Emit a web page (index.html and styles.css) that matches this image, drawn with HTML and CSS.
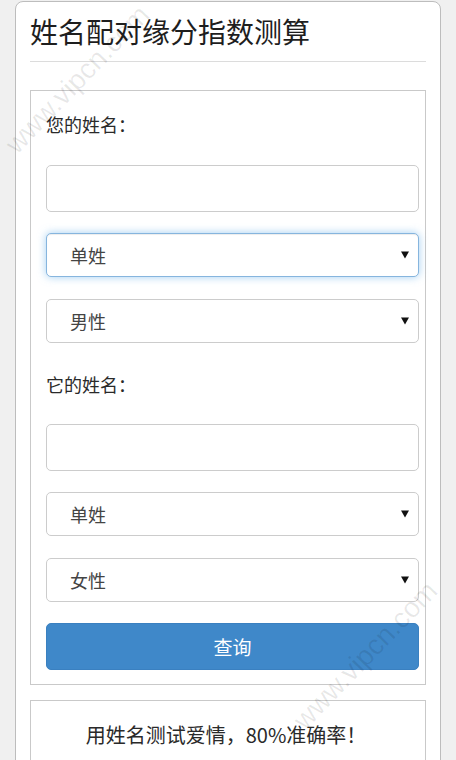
FILE: index.html
```html
<!DOCTYPE html>
<html lang="zh-CN">
<head>
<meta charset="utf-8">
<title>姓名配对缘分指数测算</title>
<link rel="stylesheet" href="styles.css">
</head>
<body>
<div class="card">
  <h1 class="title">姓名配对缘分指数测算</h1>
  <hr class="rule">
  <form class="form-box">
    <p class="label">您的姓名：</p>
    <input class="field input first-input" type="text">
    <div class="sel gap21">
      <select class="field select focus"><option>单姓</option><option>复姓</option></select>
      <svg class="arrow" width="8" height="8" viewBox="0 0 8 8"><path d="M0 0.5 H8 L4 7.5 Z" fill="#111"/></svg>
    </div>
    <div class="sel gap22">
      <select class="field select"><option>男性</option><option>女性</option></select>
      <svg class="arrow" width="8" height="8" viewBox="0 0 8 8"><path d="M0 0.5 H8 L4 7.5 Z" fill="#111"/></svg>
    </div>
    <p class="label label2">它的姓名：</p>
    <input class="field input second-input" type="text">
    <div class="sel gap21">
      <select class="field select"><option>单姓</option><option>复姓</option></select>
      <svg class="arrow" width="8" height="8" viewBox="0 0 8 8"><path d="M0 0.5 H8 L4 7.5 Z" fill="#111"/></svg>
    </div>
    <div class="sel gap22">
      <select class="field select"><option>女性</option><option>男性</option></select>
      <svg class="arrow" width="8" height="8" viewBox="0 0 8 8"><path d="M0 0.5 H8 L4 7.5 Z" fill="#111"/></svg>
    </div>
    <button class="btn" type="button">查询</button>
  </form>
  <div class="info-box">
    <p class="info">用姓名测试爱情，80%准确率！</p>
  </div>
</div>
<div class="wm wm1">www.vipcn.com</div>
<div class="wm wm2">www.vipcn.com</div>
</body>
</html>
```

FILE: styles.css
```css
html, body {
  margin: 0;
  padding: 0;
}
body {
  background: #f0f0f0;
  font-family: "Noto Sans CJK SC", "Noto Sans", sans-serif;
  color: #333;
  overflow: hidden;
  height: 760px;
}
.card {
  box-sizing: border-box;
  width: 426px;
  margin: 1px 0 0 15px;
  height: 780px;
  background: #fff;
  border: 1px solid #bdbdbd;
  border-radius: 8px;
  padding: 0 14px;
}
.title {
  margin: 0;
  padding-top: 9px;
  font-size: 28px;
  line-height: 40px;
  font-weight: normal;
  color: #1e1e1e;
}
.rule {
  margin: 10px 0 0;
  border: 0;
  border-top: 1px solid #dcdcdc;
  height: 0;
}
.form-box {
  margin: 28px 0 0;
  border: 1px solid #c9c9c9;
  padding: 21px 6px 14px 15px;
  display: flex;
  flex-direction: column;
}
.label {
  margin: 0;
  font-size: 18px;
  line-height: 24px;
  color: #2a2a2a;
}
.label2 {
  margin-top: 29px;
}
.field {
  box-sizing: border-box;
  width: 100%;
  border: 1px solid #cccccc;
  border-radius: 5px;
  background: #fff;
  font-family: inherit;
  outline: none;
}
.input {
  height: 47px;
  display: block;
}
.first-input {
  margin-top: 29px;
}
.second-input {
  margin-top: 28px;
}
.sel {
  position: relative;
}
.gap21 {
  margin-top: 21px;
}
.gap22 {
  margin-top: 22px;
}
.select {
  display: block;
  height: 44px;
  -webkit-appearance: none;
  appearance: none;
  padding: 0 0 0 23px;
  font-size: 18px;
  color: #444;
}
.select.focus {
  border-color: #86b5de;
  box-shadow: inset 0 1px 1px rgba(0,0,0,.075), 0 0 8px rgba(102,175,233,.6);
}
.arrow {
  position: absolute;
  right: 10px;
  top: 18px;
}
.btn {
  margin-top: 21px;
  height: 47px;
  width: 100%;
  border: 1px solid #3a80c0;
  border-radius: 5px;
  background: #3f88c9;
  color: #fff;
  font-family: inherit;
  font-size: 19px;
  padding: 0;
}
.info-box {
  margin-top: 15px;
  border: 1px solid #c9c9c9;
  padding: 19px 4px 30px 0;
}
.info {
  margin: 0;
  text-align: center;
  font-size: 20px;
  line-height: 30px;
  color: #2a2a2a;
}
.wm {
  position: absolute;
  font-family: "Liberation Sans", sans-serif;
  font-size: 28px;
  color: rgba(0,0,0,0.09);
  transform: rotate(-46deg);
  transform-origin: left bottom;
  white-space: nowrap;
  pointer-events: none;
}
.wm1 {
  left: 22px;
  top: 128px;
}
.wm2 {
  left: 310px;
  top: 704px;
}
```
